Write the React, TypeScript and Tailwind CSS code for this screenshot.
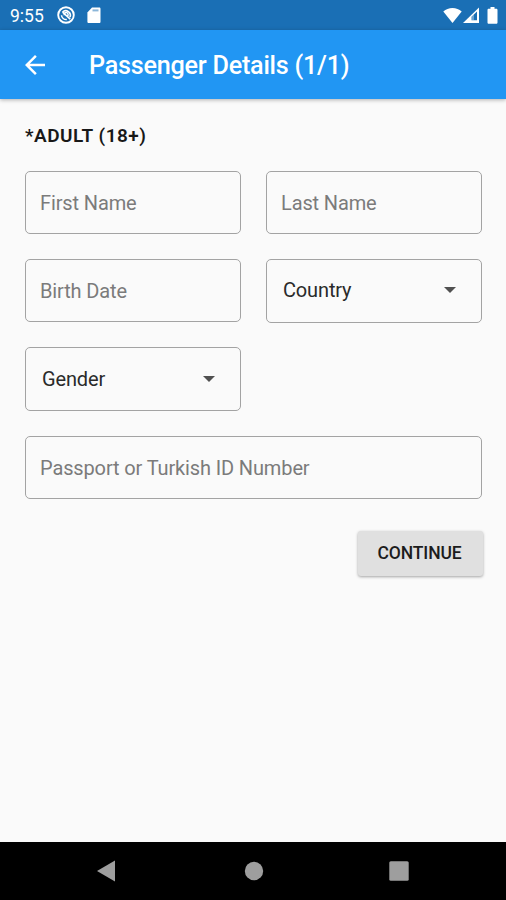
import { useState } from 'react';

interface TextFieldProps {
  label: string;
  className?: string;
}

interface SelectFieldProps {
  label: string;
  className?: string;
}

/**
 * Outlined text input
 */
function TextField({ label, className = '' }: TextFieldProps) {
  const [value, setValue] = useState('');

  return (
    <input
      type="text"
      value={value}
      onChange={(e) => setValue(e.target.value)}
      placeholder={label}
      aria-label={label}
      className={`h-[63px] w-full min-w-0 rounded-[5px] border border-[#a3a3a3] px-3.5 text-[20px] tracking-[-0.13px] text-[#212121] outline-none placeholder:text-[#7b7b7b] ${className}`}
    />
  );
}

/**
 * Outlined dropdown button
 */
function SelectField({ label, className = '' }: SelectFieldProps) {
  return (
    <button
      type="button"
      className={`flex h-16 w-full items-center justify-between rounded-[5px] border border-[#a3a3a3] pr-[25px] pl-4 text-[20px] tracking-[-0.15px] text-[#2a2a2a] ${className}`}
    >
      <span className="leading-6">{label}</span>
      <svg width="12" height="6" viewBox="0 0 12 6" fill="#505050">
        <path d="M0 0h12L6 6z" />
      </svg>
    </button>
  );
}

function StatusBar() {
  return (
    <div className="flex h-[30px] items-center bg-[#1a6fb5] pr-[8px] pl-2.5 text-white">
      <span className="w-[34px] pt-0.5 text-[17.5px] leading-5 whitespace-nowrap">9:55</span>

      {/* Notification icons */}
      <svg className="ml-[13px]" width="18" height="18" viewBox="0 0 18 18" fill="none" stroke="white">
        <circle cx="9" cy="9" r="7.8" strokeWidth="1.9" />
        <path d="M5.600 6.200A4.500 4.500 0 0 1 12.900 11.200" strokeWidth="1.7" />
        <path d="M4.500 9.200A4.600 4.600 0 0 0 9.800 13.500" strokeWidth="1.5" />
        <path d="M7.400 9.200A1.900 1.900 0 1 1 10 10.200" strokeWidth="1.4" />
        <path d="M5.600 6.200l7.600 7" strokeWidth="1.6" />
      </svg>
      <svg className="ml-[12px]" width="14" height="17" viewBox="0 0 14 17">
        <path d="M5 .5h7.300c.7 0 1.200.5 1.200 1.200v13.100c0 .8-.5 1.300-1.200 1.300H1.600C.9 16.100.4 15.600.4 14.800V5.500z" fill="white" />
        <path d="M5.500 3.400h6" stroke="#1a6fb5" strokeWidth="2" opacity=".5" />
      </svg>

      {/* Connection and battery */}
      <svg className="ml-auto" width="19" height="17" viewBox="0 0 19 17" fill="white">
        <path d="M9.500 16L.3 4.500C2.800 2.300 6 1 9.500 1s6.700 1.300 9.200 3.500z" />
      </svg>
      <svg className="ml-[1px]" width="16" height="17" viewBox="0 0 16 17">
        <path d="M0 16L16 .5V16z" fill="white" />
        <path d="M8.500 9.700L14 4.400v8.900H8.500z" fill="#1a6fb5" />
        <path d="M8.500 13.300V9.700l2.500-2.400v6z" fill="white" opacity=".35" />
      </svg>
      <svg className="ml-[8px]" width="11" height="17" viewBox="0 0 11 17" fill="white">
        <path d="M3.500 0h4v1.700h1.700c.8 0 1.300.5 1.300 1.300v12.500c0 .8-.5 1.300-1.300 1.300H1.800C1 16.800.5 16.300.5 15.500V3c0-.8.5-1.300 1.300-1.300h1.700z" />
      </svg>
    </div>
  );
}

function AppBar() {
  return (
    <header className="flex h-[69px] items-center bg-[#2196f3] pl-[25px] text-white shadow-[0_1px_4px_rgba(0,0,0,0.3)]">
      <button type="button" aria-label="Back">
        <svg width="20" height="20" viewBox="4 4 16 16" fill="white">
          <path d="M20 11H7.830l5.590-5.590L12 4l-8 8 8 8 1.410-1.410L7.830 13H20v-2z" />
        </svg>
      </button>
      <h1 className="ml-11 pt-0.5 text-[25.2px] leading-[30px] font-medium tracking-[-0.24px] whitespace-nowrap">
        Passenger Details (1/1)
      </h1>
    </header>
  );
}

function NavigationBar() {
  return (
    <nav className="flex h-[58px] items-center justify-between bg-black pr-[97px] pl-[97px]">
      <svg width="18" height="22" viewBox="0 0 18 22" fill="#9e9e9e">
        <path d="M0 11L18 .5v21z" />
      </svg>
      <svg className="ml-[3px]" width="20" height="20" viewBox="0 0 20 20" fill="#9e9e9e">
        <circle cx="10" cy="10" r="9.200" />
      </svg>
      <svg width="20" height="20" viewBox="0 0 20 20" fill="#9e9e9e">
        <rect x=".3" y=".3" width="19.400" height="19.400" rx="1.500" />
      </svg>
    </nav>
  );
}

export default function App() {
  return (
    <div className="flex h-[900px] w-[506px] flex-col overflow-hidden bg-[#fafafa] font-['Roboto',sans-serif]">
      <StatusBar />
      <AppBar />

      <main className="flex flex-1 flex-col pr-6 pl-[25px]">
        <h2 className="mt-[25px] text-[19px] leading-6 font-semibold tracking-[0.5px] text-[#181818]">
          *ADULT (18+)
        </h2>

        {/* Passenger form */}
        <form className="mt-[23px] grid grid-cols-2 gap-x-[25px]">
          <TextField label="First Name" />
          <TextField label="Last Name" />
          <TextField label="Birth Date" className="mt-[25px]" />
          <SelectField label="Country" className="mt-[25px] pb-0.5" />
          <SelectField label="Gender" className="mt-6" />
          <TextField label="Passport or Turkish ID Number" className="col-span-2 mt-[25px]" />
        </form>

        <button
          type="button"
          className="mt-8 -mr-[1px] h-[45px] w-[125px] self-end rounded-[3px] bg-[#e0e0e0] pr-[2px] text-[17.500px] font-medium tracking-[-0.1px] text-[#1c1c1c] shadow-[0_1px_3px_rgba(0,0,0,0.35)]"
        >
          CONTINUE
        </button>
      </main>

      <NavigationBar />
    </div>
  );
}
